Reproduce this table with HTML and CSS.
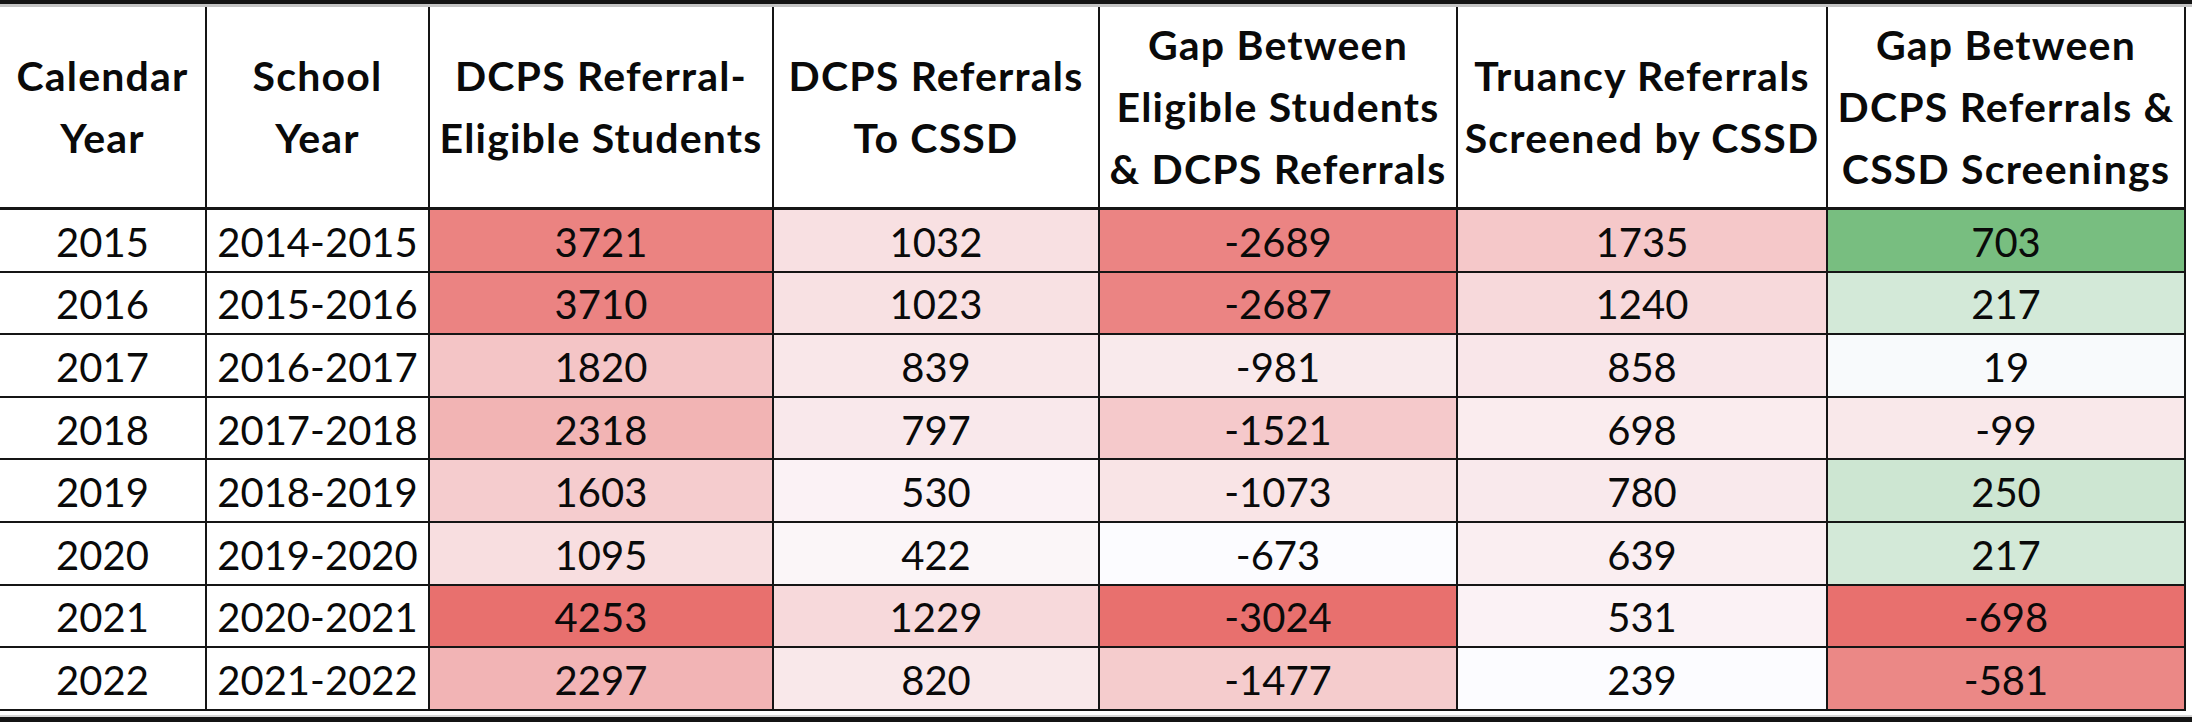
FILE: index.html
```html
<!DOCTYPE html>
<html lang="en">
<head>
<meta charset="utf-8">
<title>DCPS Truancy Referrals</title>
<link rel="stylesheet" href="styles.css">
</head>
<body>
<div class="topbar"></div>
<div class="sheet">
  <div class="grid">
    <div class="cell head">Calendar<br>Year</div>
    <div class="cell head">School<br>Year</div>
    <div class="cell head">DCPS Referral-<br>Eligible Students</div>
    <div class="cell head">DCPS Referrals<br>To CSSD</div>
    <div class="cell head">Gap Between<br>Eligible Students<br>&amp; DCPS Referrals</div>
    <div class="cell head">Truancy Referrals<br>Screened by CSSD</div>
    <div class="cell head">Gap Between<br>DCPS Referrals &amp;<br>CSSD Screenings</div>

    <div class="cell">2015</div><div class="cell">2014-2015</div>
    <div class="cell" style="background:#EB8381">3721</div>
    <div class="cell" style="background:#F8E0E2">1032</div>
    <div class="cell" style="background:#EB8483">-2689</div>
    <div class="cell" style="background:#F5C8C9">1735</div>
    <div class="cell" style="background:#78BE80">703</div>

    <div class="cell">2016</div><div class="cell">2015-2016</div>
    <div class="cell" style="background:#EB8382">3710</div>
    <div class="cell" style="background:#F8E1E3">1023</div>
    <div class="cell" style="background:#EB8483">-2687</div>
    <div class="cell" style="background:#F7D9DB">1240</div>
    <div class="cell" style="background:#D3E9D8">217</div>

    <div class="cell">2017</div><div class="cell">2016-2017</div>
    <div class="cell" style="background:#F4C5C6">1820</div>
    <div class="cell" style="background:#F9E7E9">839</div>
    <div class="cell" style="background:#F9EAEC">-981</div>
    <div class="cell" style="background:#F9E6E9">858</div>
    <div class="cell" style="background:#F8FAFC">19</div>

    <div class="cell">2018</div><div class="cell">2017-2018</div>
    <div class="cell" style="background:#F2B4B4">2318</div>
    <div class="cell" style="background:#F9E8EB">797</div>
    <div class="cell" style="background:#F5C9CB">-1521</div>
    <div class="cell" style="background:#FAECEE">698</div>
    <div class="cell" style="background:#F9E8EA">-99</div>

    <div class="cell">2019</div><div class="cell">2018-2019</div>
    <div class="cell" style="background:#F5CCCE">1603</div>
    <div class="cell" style="background:#FBF2F5">530</div>
    <div class="cell" style="background:#F9E4E6">-1073</div>
    <div class="cell" style="background:#F9E9EC">780</div>
    <div class="cell" style="background:#CDE6D2">250</div>

    <div class="cell">2020</div><div class="cell">2019-2020</div>
    <div class="cell" style="background:#F8DEE0">1095</div>
    <div class="cell" style="background:#FBF6F8">422</div>
    <div class="cell" style="background:#FCFCFF">-673</div>
    <div class="cell" style="background:#FAEEF1">639</div>
    <div class="cell" style="background:#D3E9D8">217</div>

    <div class="cell">2021</div><div class="cell">2020-2021</div>
    <div class="cell" style="background:#E8706E">4253</div>
    <div class="cell" style="background:#F7D9DB">1229</div>
    <div class="cell" style="background:#E8706E">-3024</div>
    <div class="cell" style="background:#FBF2F5">531</div>
    <div class="cell" style="background:#E8706E">-698</div>

    <div class="cell">2022</div><div class="cell">2021-2022</div>
    <div class="cell" style="background:#F2B4B5">2297</div>
    <div class="cell" style="background:#F9E8EA">820</div>
    <div class="cell" style="background:#F5CCCD">-1477</div>
    <div class="cell" style="background:#FCFCFF">239</div>
    <div class="cell" style="background:#EB8886">-581</div>
  </div>
</div>
<div class="bottombar"></div>
</body>
</html>
```
FILE: styles.css
```css
html, body {
  margin: 0;
  padding: 0;
  background: #ffffff;
  width: 2192px;
  height: 722px;
  overflow: hidden;
}

.topbar {
  height: 4px;
  background: #141414;
  border-bottom: 3px solid #c4c4c4;
}

.sheet {
  height: 708px;
  background: #ffffff;
}

.grid {
  display: grid;
  width: 2186px;
  grid-template-columns: 207px 223px 344px 326px 358px 370px 358px;
  grid-template-rows: 203px repeat(8, 62.6px);
  font-family: Lato, "Open Sans", sans-serif;
  font-size: 40px;
  color: #0a0a0a;
}

.cell {
  box-sizing: border-box;
  border-right: 2px solid #151515;
  border-bottom: 2px solid #151515;
  display: flex;
  align-items: center;
  justify-content: center;
  text-align: center;
  padding-top: 3px;
}

.head {
  font-weight: 700;
  font-size: 41px;
  letter-spacing: 1.2px;
  line-height: 62px;
  padding-top: 0;
  border-bottom-width: 3px;
}

.bottombar {
  height: 7px;
  background: #141414;
  border-top: 2px solid #d6d6d6;
}
```
